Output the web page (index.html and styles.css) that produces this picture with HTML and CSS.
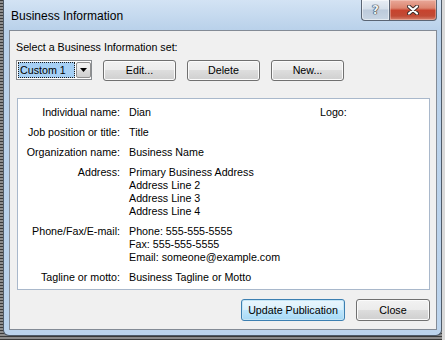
FILE: index.html
```html
<!DOCTYPE html>
<html>
<head>
<meta charset="utf-8">
<link rel="stylesheet" href="styles.css">
</head>
<body>
<div class="window">
  <div class="titlebar">
    <span class="title">Business Information</span>
    <div class="caption-btns">
      <div class="cbtn help">?</div>
      <div class="cbtn close">
        <svg width="12" height="10" viewBox="0 0 12 10">
          <path d="M2 1.5 L10 8.5 M10 1.5 L2 8.5" stroke="#3a2a28" stroke-width="4" stroke-linecap="round"/>
          <path d="M2 1.5 L10 8.5 M10 1.5 L2 8.5" stroke="#ffffff" stroke-width="2.2" stroke-linecap="round"/>
        </svg>
      </div>
    </div>
  </div>
  <div class="client">
    <div class="setlabel">Select a Business Information set:</div>
    <div class="controls">
      <div class="combo">
        <span class="sel">Custom 1</span>
        <span class="arrow"><svg width="7" height="4" viewBox="0 0 7 4"><path d="M0 0 H7 L3.5 4 Z" fill="#000"/></svg></span>
      </div>
      <div class="btn">Edit...</div>
      <div class="btn">Delete</div>
      <div class="btn">New...</div>
    </div>
    <div class="panel">
      <div class="grid">
        <div class="lbl">Individual name:</div>
        <div class="val">Dian</div>
        <div class="logo">Logo:</div>
        <div class="lbl">Job position or title:</div>
        <div class="val">Title</div>
        <div class="lbl">Organization name:</div>
        <div class="val">Business Name</div>
        <div class="lbl">Address:</div>
        <div class="val">Primary Business Address<br>Address Line 2<br>Address Line 3<br>Address Line 4</div>
        <div class="lbl">Phone/Fax/E-mail:</div>
        <div class="val">Phone: 555-555-5555<br>Fax: 555-555-5555<br>Email: someone@example.com</div>
        <div class="lbl">Tagline or motto:</div>
        <div class="val">Business Tagline or Motto</div>
      </div>
    </div>
    <div class="footer">
      <div class="btn default wide">Update Publication</div>
      <div class="btn close-btn">Close</div>
    </div>
  </div>
</div>
</body>
</html>
```
FILE: styles.css
```css
html, body {
  margin: 0;
  padding: 0;
}
body {
  width: 445px;
  height: 340px;
  overflow: hidden;
  font-family: "Liberation Sans", Arial, sans-serif;
  font-size: 10.7px;
  color: #000;
  background:
    linear-gradient(to right, transparent 442px, #d9d9d9 442px),
    repeating-linear-gradient(to bottom, #3b3b3b 0 1px, #8c8c8c 1px 3px);
}
.window {
  box-sizing: border-box;
  margin-left: 3px;
  width: 439px;
  height: 336px;
  border: 1px solid #4f5b69;
  border-top: 0;
  border-radius: 0 0 6px 6px;
  background: linear-gradient(to bottom, #d3e3f4 0, #b9d1ea 30px, #bcd4ed 100%);
  padding: 0 4px 5px 5px;
  display: flex;
  flex-direction: column;
}
.titlebar {
  height: 30px;
  flex: none;
  display: flex;
  align-items: flex-start;
}
.title {
  font-size: 12px;
  line-height: 15px;
  margin-top: 9px;
  margin-left: 2px;
  color: #000;
}
.caption-btns {
  margin-left: auto;
  display: flex;
}
.cbtn {
  box-sizing: border-box;
  height: 21px;
  border: 1px solid #5a6574;
  border-top: 0;
  display: flex;
  align-items: center;
  justify-content: center;
}
.help {
  width: 28px;
  border-right: 0;
  border-radius: 0 0 0 4px;
  background: linear-gradient(to bottom, #e8eef5 0, #d5dfea 45%, #bccadb 50%, #c8d5e3 100%);
  box-shadow: inset 0 0 0 1px rgba(255,255,255,0.5);
  font-family: "DejaVu Sans", sans-serif;
  font-size: 12px;
  font-weight: bold;
  color: #eef2f6;
  text-shadow: 0 0 1px #1f2a36, 0 0 1px #1f2a36, 0 0 1px #1f2a36;
}
.close {
  width: 48px;
  border-radius: 0 0 4px 0;
  background: linear-gradient(to bottom, #e9a899 0, #dc8570 40%, #c7432e 52%, #c14a35 80%, #d7826f 100%);
  box-shadow: inset 0 0 0 1px rgba(255,230,220,0.35);
}
.client {
  flex: 1;
  border: 1px solid #838b96;
  background: #f0f0f0;
  padding: 10px 6px 0 6px;
  display: flex;
  flex-direction: column;
}
.setlabel {
  line-height: 13px;
}
.controls {
  margin-top: 6px;
  display: flex;
  align-items: flex-start;
  gap: 11px;
}
.combo {
  box-sizing: border-box;
  width: 76px;
  height: 20px;
  border: 1px solid #8a8d91;
  background: #fff;
  padding: 1px 0 1px 1px;
  display: flex;
  gap: 1px;
}
.sel {
  box-sizing: border-box;
  width: 57px;
  height: 16px;
  border: 1px dotted #1b1b1b;
  background: #a6d0f5;
  padding-left: 1px;
  line-height: 14px;
}
.arrow {
  box-sizing: border-box;
  width: 15px;
  height: 16px;
  border: 1px solid #8f8f8f;
  border-radius: 2px;
  background: linear-gradient(to bottom, #f2f2f2 0, #ebebeb 50%, #dddddd 50%, #cfcfcf 100%);
  display: flex;
  align-items: center;
  justify-content: center;
}
.btn {
  box-sizing: border-box;
  width: 73px;
  height: 21px;
  border: 1px solid #707070;
  border-radius: 3px;
  background: linear-gradient(to bottom, #f2f2f2 0, #ebebeb 50%, #dddddd 50%, #cfcfcf 100%);
  box-shadow: inset 0 0 0 1px #fbfbfb;
  display: flex;
  align-items: center;
  justify-content: center;
  line-height: 13px;
}
.panel {
  box-sizing: border-box;
  margin-top: 17px;
  margin-left: 1px;
  height: 192px;
  border: 1px solid #a9b8cb;
  background: #fff;
  padding-top: 7px;
}
.grid {
  display: grid;
  grid-template-columns: 102px 182px auto;
  column-gap: 9px;
  row-gap: 7px;
  line-height: 13px;
}
.lbl {
  grid-column: 1;
  text-align: right;
  white-space: nowrap;
}
.val {
  grid-column: 2;
  white-space: nowrap;
}
.logo {
  grid-column: 3;
}
.footer {
  margin-top: 9px;
  display: flex;
  justify-content: flex-end;
  gap: 11px;
}
.footer .btn {
  height: 22px;
}
.wide {
  width: 104px;
}
.close-btn {
  width: 74px;
}
.btn.default {
  border-color: #3c7fb1;
  background: linear-gradient(to bottom, #eaf6fd 0, #d9f0fc 50%, #bee6fd 50%, #a7d9f5 100%);
  box-shadow: inset 0 0 0 1px #c4e5f6;
}
```
